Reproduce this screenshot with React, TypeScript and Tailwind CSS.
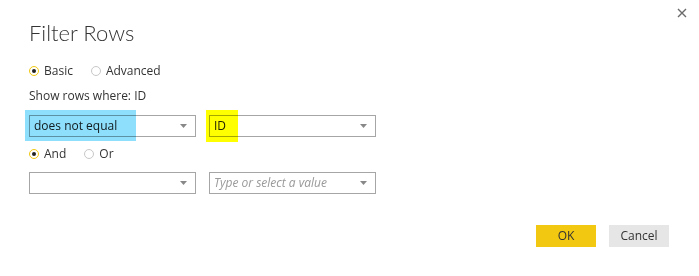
import React from "react";

function Radio({ checked, label }: { checked: boolean; label: string }) {
  return (
    <div className="flex items-center gap-[5px] h-[18px]">
      <span
        className={
          checked
            ? "w-[10px] h-[10px] rounded-full border-[1.5px] border-[#f2c811] flex items-center justify-center"
            : "w-[10px] h-[10px] rounded-full border-[1.5px] border-[#c8c8c8]"
        }
      >
        {checked && <span className="w-[4px] h-[4px] rounded-full bg-[#222]" />}
      </span>
      <span className="text-[12px] leading-[18px] text-[#333]">{label}</span>
    </div>
  );
}

function Caret() {
  return (
    <svg width="7" height="4" viewBox="0 0 7 4" className="shrink-0">
      <path d="M0 0 H7 L3.5 4 Z" fill="#888" />
    </svg>
  );
}

function Select({
  value,
  placeholder,
  highlight,
}: {
  value?: string;
  placeholder?: string;
  highlight?: "blue" | "yellow";
}) {
  return (
    <div className="relative w-[167px] h-[22px] border border-[#a6a6a6] flex items-center justify-between pl-[4px] pr-[8px]">
      {value ? (
        <span className="text-[12px] text-[#222]">{value}</span>
      ) : placeholder ? (
        <span className="text-[12px] italic text-[#999]">{placeholder}</span>
      ) : (
        <span />
      )}
      <Caret />
      {highlight === "blue" && (
        <div className="absolute left-[-5px] top-[-6px] w-[111px] h-[31px] bg-[#8ddffb] mix-blend-multiply pointer-events-none" />
      )}
      {highlight === "yellow" && (
        <div className="absolute left-[-4px] top-[-6px] w-[32px] h-[32px] bg-[#ffff00] mix-blend-multiply pointer-events-none" />
      )}
    </div>
  );
}

export default function App() {
  return (
    <div
      className="relative w-[699px] h-[276px] bg-white isolate"
      style={{ fontFamily: '"Open Sans", "Noto Sans", sans-serif' }}
    >
      <button className="absolute right-[12px] top-[8px] w-[10px] h-[10px]">
        <svg width="10" height="10" viewBox="0 0 10 10">
          <path d="M1 1 L9 9 M9 1 L1 9" stroke="#6b6b6b" strokeWidth="1.4" />
        </svg>
      </button>
      <div className="pl-[29px] pt-[17px] flex flex-col">
        <h1
          className="text-[22px] font-light text-[#333] leading-[32px]"
          style={{ fontFamily: 'Lato, "Open Sans", sans-serif' }}
        >
          Filter Rows
        </h1>
        <div className="mt-[13px] flex gap-[18px]">
          <Radio checked label="Basic" />
          <Radio checked={false} label="Advanced" />
        </div>
        <div className="mt-[7px] text-[12px] text-[#333] leading-[17px]">Show rows where: ID</div>
        <div className="mt-[11px] flex gap-[13px]">
          <Select value="does not equal" highlight="blue" />
          <Select value="ID" highlight="yellow" />
        </div>
        <div className="mt-[8px] flex gap-[18px]">
          <Radio checked label="And" />
          <Radio checked={false} label="Or" />
        </div>
        <div className="mt-[9px] flex gap-[13px]">
          <Select />
          <Select placeholder="Type or select a value" />
        </div>
      </div>
      <div className="absolute right-[30px] top-[225px] flex gap-[13px]">
        <button className="w-[60px] h-[22px] bg-[#f2c811] text-[12px] text-[#333]">OK</button>
        <button className="w-[60px] h-[22px] bg-[#e6e6e6] text-[12px] text-[#333]">Cancel</button>
      </div>
    </div>
  );
}
